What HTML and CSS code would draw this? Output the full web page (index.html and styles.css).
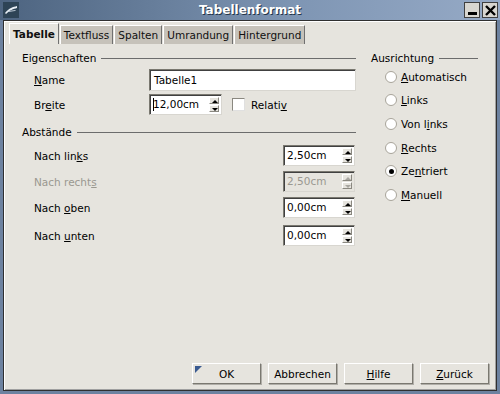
FILE: index.html
```html
<!DOCTYPE html>
<html lang="de">
<head>
    <meta charset="UTF-8">
    <title>Tabellenformat</title>
    <link rel="stylesheet" href="styles.css">
</head>
<body>
    <div class="window">
        <div class="titlebar">
            <svg class="app-icon" width="16" height="16" viewBox="0 0 16 16">
                <rect x="0" y="0" width="16" height="16" fill="#2e4456"/>
                <path d="M2 11 C6 6, 10 5, 14 4 L14 6 C10 7, 7 8, 3 12 Z" fill="#e8eef4"/>
                <path d="M5 9 L13 8 L12 9 L5 10 Z" fill="#c8d4e0"/>
            </svg>
            <span class="title">Tabellenformat</span>
            <div class="win-buttons">
                <span class="win-btn"><svg width="13" height="13" viewBox="0 0 13 13"><rect x="2" y="8" width="9" height="3" fill="#000"/></svg></span>
                <span class="win-btn"><svg width="13" height="13" viewBox="0 0 13 13"><path d="M2 2 L11 11 M11 2 L2 11" stroke="#000" stroke-width="2.4"/></svg></span>
            </div>
        </div>
        <div class="client">
            <div class="tabs">
                <span class="tab active">Tabelle</span>
                <span class="tab">Textfluss</span>
                <span class="tab">Spalten</span>
                <span class="tab">Umrandung</span>
                <span class="tab">Hintergrund</span>
            </div>
            <div class="page">
                <div class="left">
                    <div class="group-title"><span>Eigenschaften</span><i></i></div>
                    <div class="row">
                        <label class="label"><u>N</u>ame</label>
                        <div class="field name-field">Tabelle1</div>
                    </div>
                    <div class="row">
                        <label class="label">Br<u>e</u>ite</label>
                        <div class="spin wide">
                            <div class="spin-text"><span class="caret"></span>12,00cm</div>
                            <div class="spin-arrows"><b class="up"></b><b class="down"></b></div>
                        </div>
                        <span class="check"></span>
                        <span class="check-label">Relati<u>v</u></span>
                    </div>

                    <div class="group-title second"><span>Abstände</span><i></i></div>
                    <div class="row dist first">
                        <label class="label">Nach lin<u>k</u>s</label>
                        <div class="spin">
                            <div class="spin-text">2,50cm</div>
                            <div class="spin-arrows"><b class="up"></b><b class="down"></b></div>
                        </div>
                    </div>
                    <div class="row dist disabled">
                        <label class="label">Nach recht<u>s</u></label>
                        <div class="spin">
                            <div class="spin-text">2,50cm</div>
                            <div class="spin-arrows"><b class="up"></b><b class="down"></b></div>
                        </div>
                    </div>
                    <div class="row dist">
                        <label class="label">Nach <u>o</u>ben</label>
                        <div class="spin">
                            <div class="spin-text">0,00cm</div>
                            <div class="spin-arrows"><b class="up"></b><b class="down"></b></div>
                        </div>
                    </div>
                    <div class="row dist last">
                        <label class="label">Nach <u>u</u>nten</label>
                        <div class="spin">
                            <div class="spin-text">0,00cm</div>
                            <div class="spin-arrows"><b class="up"></b><b class="down"></b></div>
                        </div>
                    </div>
                </div>

                <div class="right">
                    <div class="group-title"><span>Ausrichtung</span><i></i></div>
                    <div class="radios">
                        <div class="radio"><span class="dot"></span><u>A</u>utomatisch</div>
                        <div class="radio"><span class="dot"></span><u>L</u>inks</div>
                        <div class="radio"><span class="dot"></span>Von l<u>i</u>nks</div>
                        <div class="radio"><span class="dot"></span><u>R</u>echts</div>
                        <div class="radio"><span class="dot checked"></span>Ze<u>n</u>triert</div>
                        <div class="radio"><span class="dot"></span><u>M</u>anuell</div>
                    </div>
                </div>
            </div>
            <div class="buttons">
                <button class="button default">OK</button>
                <button class="button">Abbrechen</button>
                <button class="button"><u>H</u>ilfe</button>
                <button class="button"><u>Z</u>urück</button>
            </div>
        </div>
    </div>
</body>
</html>
```

FILE: styles.css
```css
body {
    margin: 0;
    padding: 0;
    font-family: "DejaVu Sans", Verdana, sans-serif;
    font-size: 10.5px;
    color: #000;
    background: #e6e4de;
}

.window {
    width: 500px;
    height: 394px;
    box-sizing: border-box;
    background: #6d82a0;
    padding: 0 3px 3px 3px;
    display: flex;
    flex-direction: column;
}

.titlebar {
    height: 20px;
    display: flex;
    align-items: center;
    position: relative;
    background: linear-gradient(to right, #4d6480, #7f96b4 60%, #96aac6);
    margin: 0 -3px;
    padding: 0 2px;
}

.app-icon {
    margin-left: 1px;
}

.title {
    position: absolute;
    left: 0;
    right: 0;
    text-align: center;
    color: #fff;
    font-weight: bold;
    font-size: 12px;
    text-shadow: 1px 1px 0 #24354a;
}

.win-buttons {
    margin-left: auto;
    display: flex;
    gap: 2px;
    position: relative;
}

.win-btn {
    width: 14px;
    height: 14px;
    background: #d8d6d0;
    border: 1px solid #404040;
    display: flex;
    align-items: center;
    justify-content: center;
}

.client {
    flex: 1;
    background: #e6e4de;
    border: 1px solid #303030;
    box-shadow: inset 1px 1px 0 #fff, inset -1px -1px 0 #a0a0a0;
    display: flex;
    flex-direction: column;
    padding: 2px 0 0 0;
}

.tabs {
    display: flex;
    align-items: flex-end;
    padding-left: 5px;
    height: 21px;
    gap: 1px;
}

.tab {
    height: 18px;
    line-height: 18px;
    padding: 0 3px;
    background: #c6c2ba;
    border: 1px solid #fff;
    border-right-color: #707070;
    border-bottom: none;
    color: #101010;
}

.tab.active {
    height: 20px;
    line-height: 20px;
    background: #e6e4de;
    font-weight: bold;
}

.page {
    flex: 1;
    display: flex;
    padding: 7px 0 0 18px;
}

.left {
    width: 334px;
}

.right {
    margin-left: 15px;
    width: 107px;
}

.group-title {
    display: flex;
    align-items: center;
    height: 14px;
}

.group-title span {
    padding-right: 5px;
}

.group-title i {
    flex: 1;
    height: 1px;
    background: #6c6c6c;
}

.group-title.second {
    margin-top: 10px;
}

.row {
    display: flex;
    align-items: center;
    height: 21px;
    margin-top: 4px;
}

.row.dist {
    margin-top: 5px;
}

.row.dist.first {
    margin-top: 6px;
}

.row.dist.last {
    margin-top: 7px;
}

.label {
    width: 115px;
    padding-left: 12px;
}

.field {
    height: 22px;
    box-sizing: border-box;
    flex: 1;
    background: #fff;
    border: 1px solid #7a7870;
    border-right-color: #d8d6d0;
    border-bottom-color: #d8d6d0;
    box-shadow: inset 1px 1px 0 #404040;
    line-height: 20px;
    padding-left: 4px;
}

.spin {
    display: flex;
    height: 21px;
    width: 72px;
    box-sizing: border-box;
    background: #fff;
    border: 1px solid #7a7870;
    border-right-color: #d8d6d0;
    border-bottom-color: #d8d6d0;
    box-shadow: inset 1px 1px 0 #404040;
}

.dist .spin {
    margin-left: auto;
    margin-right: 1px;
}

.spin.wide {
    width: 73px;
}

.spin-text {
    flex: 1;
    line-height: 19px;
    padding-left: 3px;
    display: flex;
    align-items: center;
}

.caret {
    width: 1px;
    height: 13px;
    background: #000;
    margin-right: -1px;
}

.spin-arrows {
    width: 10px;
    margin: 2px 2px 2px 0;
    display: flex;
    flex-direction: column;
    gap: 1px;
}

.spin-arrows b {
    flex: 1;
    background: #e6e4de;
    border: 1px solid #fff;
    border-right-color: #8a8880;
    border-bottom-color: #8a8880;
    position: relative;
}

.spin-arrows b::after {
    content: "";
    position: absolute;
    left: 2px;
    top: 2px;
    border-left: 3px solid transparent;
    border-right: 3px solid transparent;
}

.spin-arrows .up::after {
    border-bottom: 3px solid #000;
}

.spin-arrows .down::after {
    border-top: 3px solid #000;
}

.disabled {
    color: #9a9890;
}

.disabled .spin {
    background: #e6e4de;
}

.disabled .spin-arrows .up::after {
    border-bottom-color: #a8a6a0;
}

.disabled .spin-arrows .down::after {
    border-top-color: #a8a6a0;
}

.check {
    width: 11px;
    height: 11px;
    margin-left: 10px;
    background: #fff;
    border: 1px solid #8a8880;
    border-right-color: #e0e0e0;
    border-bottom-color: #e0e0e0;
}

.check-label {
    margin-left: 6px;
}

.radios {
    padding-left: 14px;
}

.radio {
    height: 23.6px;
    display: flex;
    align-items: center;
}

.dot {
    width: 10px;
    height: 10px;
    border-radius: 50%;
    background: #fff;
    border: 1px solid #a8a49a;
    margin-right: 4px;
    box-sizing: content-box;
    display: flex;
    align-items: center;
    justify-content: center;
}

.dot.checked::after {
    content: "";
    width: 5px;
    height: 5px;
    border-radius: 50%;
    background: #000;
}

.buttons {
    display: flex;
    justify-content: flex-end;
    gap: 7px;
    padding: 0 7px 6px 0;
}

.button {
    width: 69px;
    height: 21px;
    font-family: "DejaVu Sans", Verdana, sans-serif;
    font-size: 10.5px;
    background: #e6e4de;
    border: 1px solid #fff;
    border-right-color: #7a7870;
    border-bottom-color: #7a7870;
    box-shadow: 1px 1px 0 #b0aea8;
    padding: 0;
    position: relative;
    color: #000;
}

.button.default::before {
    content: "";
    position: absolute;
    left: 2px;
    top: 2px;
    border-top: 7px solid #3a5a90;
    border-right: 7px solid transparent;
}
```
